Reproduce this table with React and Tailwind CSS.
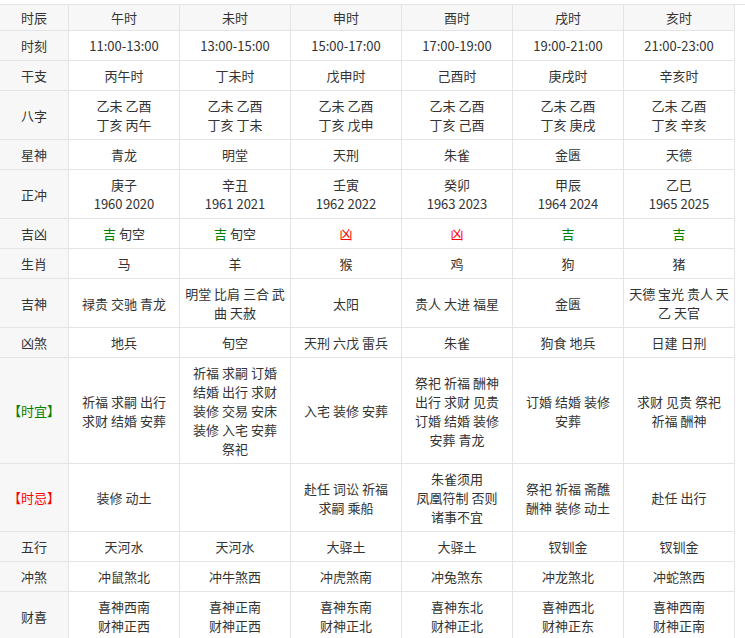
import React from 'react';

const HOURS = ['午时', '未时', '申时', '酉时', '戌时', '亥时'];

// each entry: label, then one cell per hour; a cell is an array of lines
const ROWS = [
  { label: '时刻', cells: [['11:00-13:00'], ['13:00-15:00'], ['15:00-17:00'], ['17:00-19:00'], ['19:00-21:00'], ['21:00-23:00']] },
  { label: '干支', cells: [['丙午时'], ['丁未时'], ['戊申时'], ['己酉时'], ['庚戌时'], ['辛亥时']] },
  {
    label: '八字',
    cells: [
      ['乙未 乙酉', '丁亥 丙午'],
      ['乙未 乙酉', '丁亥 丁未'],
      ['乙未 乙酉', '丁亥 戊申'],
      ['乙未 乙酉', '丁亥 己酉'],
      ['乙未 乙酉', '丁亥 庚戌'],
      ['乙未 乙酉', '丁亥 辛亥'],
    ],
  },
  { label: '星神', cells: [['青龙'], ['明堂'], ['天刑'], ['朱雀'], ['金匮'], ['天德']] },
  {
    label: '正冲',
    cells: [
      ['庚子', '1960 2020'],
      ['辛丑', '1961 2021'],
      ['壬寅', '1962 2022'],
      ['癸卯', '1963 2023'],
      ['甲辰', '1964 2024'],
      ['乙巳', '1965 2025'],
    ],
  },
  { label: '吉凶', luck: true },
  { label: '生肖', cells: [['马'], ['羊'], ['猴'], ['鸡'], ['狗'], ['猪']] },
  {
    label: '吉神',
    cells: [
      ['禄贵 交驰 青龙'],
      ['明堂 比肩 三合 武', '曲 天赦'],
      ['太阳'],
      ['贵人 大进 福星'],
      ['金匮'],
      ['天德 宝光 贵人 天', '乙 天官'],
    ],
  },
  { label: '凶煞', cells: [['地兵'], ['旬空'], ['天刑 六戊 雷兵'], ['朱雀'], ['狗食 地兵'], ['日建 日刑']] },
  {
    label: '【时宜】',
    tone: 'text-[#008000]',
    cells: [
      ['祈福 求嗣 出行', '求财 结婚 安葬'],
      ['祈福 求嗣 订婚', '结婚 出行 求财', '装修 交易 安床', '装修 入宅 安葬', '祭祀'],
      ['入宅 装修 安葬'],
      ['祭祀 祈福 酬神', '出行 求财 见贵', '订婚 结婚 装修', '安葬 青龙'],
      ['订婚 结婚 装修', '安葬'],
      ['求财 见贵 祭祀', '祈福 酬神'],
    ],
  },
  {
    label: '【时忌】',
    tone: 'text-[#ff0000]',
    cells: [
      ['装修 动土'],
      [],
      ['赴任 词讼 祈福', '求嗣 乘船'],
      ['朱雀须用', '凤凰符制 否则', '诸事不宜'],
      ['祭祀 祈福 斋醮', '酬神 装修 动土'],
      ['赴任 出行'],
    ],
  },
  { label: '五行', cells: [['天河水'], ['天河水'], ['大驿土'], ['大驿土'], ['钗钏金'], ['钗钏金']] },
  { label: '冲煞', cells: [['冲鼠煞北'], ['冲牛煞西'], ['冲虎煞南'], ['冲兔煞东'], ['冲龙煞北'], ['冲蛇煞西']] },
  {
    label: '财喜',
    cells: [
      ['喜神西南', '财神正西'],
      ['喜神正南', '财神正西'],
      ['喜神东南', '财神正北'],
      ['喜神东北', '财神正北'],
      ['喜神西北', '财神正东'],
      ['喜神西南', '财神正南'],
    ],
  },
];

const LUCK = [
  { mark: '吉', good: true, extra: '旬空' },
  { mark: '吉', good: true, extra: '旬空' },
  { mark: '凶', good: false },
  { mark: '凶', good: false },
  { mark: '吉', good: true },
  { mark: '吉', good: true },
];

const cellBase =
  'flex flex-col items-center justify-center text-center border-r border-b border-[#e4e4e8] px-[3px] leading-[19px] whitespace-nowrap';

const Lines = ({ lines }) => lines.map((line, i) => <div key={i}>{line}</div>);

export default function App() {
  return (
    <div
      className="w-[745px] h-[638px] overflow-hidden bg-white text-[13px] text-[#333]"
      style={{ fontFamily: '"Noto Sans CJK SC", "Noto Sans", sans-serif' }}
    >
      <div className="mt-[4px] grid grid-cols-[69px_repeat(6,111px)] border-t border-[#e4e4e8]">
        {/* header row */}
        <div className={`${cellBase} py-[3px] bg-[#f7f7f8]`}>时辰</div>
        {HOURS.map(h => (
          <div key={h} className={`${cellBase} py-[3px] bg-[#f7f7f8]`}>{h}</div>
        ))}

        {ROWS.map(row => (
          <React.Fragment key={row.label}>
            <div className={`${cellBase} py-[5px] bg-[#f7f7f8] ${row.tone || ''}`}>{row.label}</div>
            {row.luck
              ? LUCK.map((l, i) => (
                  <div key={i} className={`${cellBase} py-[5px] bg-white`}>
                    <div>
                      <span className={l.good ? 'text-[#008000]' : 'text-[#ff0000]'}>{l.mark}</span>
                      {l.extra && <span> {l.extra}</span>}
                    </div>
                  </div>
                ))
              : row.cells.map((lines, i) => (
                  <div key={i} className={`${cellBase} py-[5px] bg-white`}>
                    <Lines lines={lines} />
                  </div>
                ))}
          </React.Fragment>
        ))}
      </div>
    </div>
  );
}
